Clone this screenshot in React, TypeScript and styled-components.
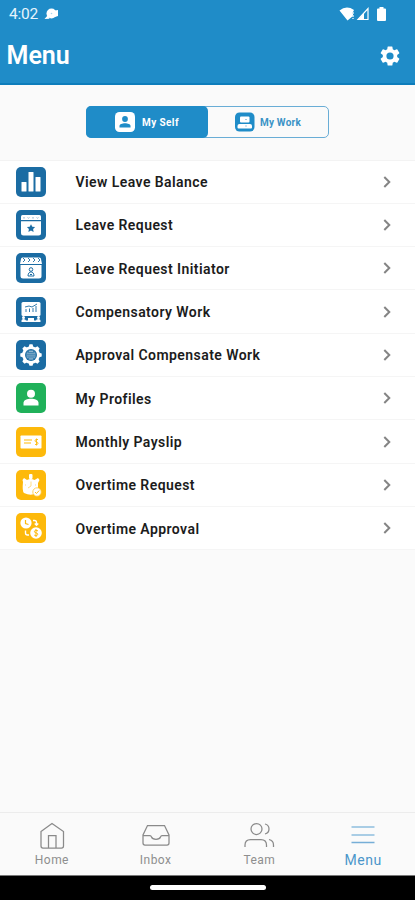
import React from "react";
import styled, { createGlobalStyle } from "styled-components";

const GlobalStyle = createGlobalStyle`
  * { box-sizing: border-box; }
  body { margin: 0; background: #fafafa; font-family: Roboto, sans-serif; }
  svg { display: block; flex: none; }
`;

const Screen = styled.div`
  width: 415px;
  height: 900px;
  display: flex;
  flex-direction: column;
  background: #fafafa;
  overflow: hidden;
`;

const Header = styled.header`
  height: 85px;
  flex: none;
  background: #1f8cc8;
  border-bottom: 2px solid #0d7dbb;
  color: #fff;
`;

const StatusBar = styled.div`
  height: 27px;
  display: flex;
  align-items: center;
  padding: 0 27px 0 9px;
`;

const Clock = styled.span`
  width: 35px;
  font-size: 15.5px;
  line-height: 20px;
  letter-spacing: -0.25px;
  color: #e6f4fc;
`;

const StatusIcons = styled.div`
  display: flex;
  align-items: center;
  margin-left: auto;
`;

const TitleBar = styled.div`
  height: 56px;
  display: flex;
  align-items: center;
  justify-content: space-between;
  padding: 1px 13px 0 6.5px;
`;

const Title = styled.h1`
  margin: 0;
  font-size: 25px;
  font-weight: 600;
  line-height: 30px;
`;

const ToggleArea = styled.div`
  height: 75.5px;
  flex: none;
  display: flex;
  justify-content: center;
  padding-top: 21px;
  border-bottom: 1px solid #f3f3f3;
`;

const Toggle = styled.div`
  width: 243px;
  height: 32px;
  display: flex;
  border: 1px solid #69add6;
  border-radius: 5px;
`;

const ToggleButton = styled.button<{ $active?: boolean }>`
  flex: ${(p) => (p.$active ? "0 0 122px" : "1")};
  margin: ${(p) => (p.$active ? "-1px 0 -1px -1px" : "0")};
  padding: ${(p) => (p.$active ? "0 0 0 29px" : "0 0 0 27px")};
  border: 0;
  border-radius: 5px;
  display: flex;
  align-items: center;
  gap: ${(p) => (p.$active ? "7px" : "5px")};
  font: 700 10px Roboto, sans-serif;
  letter-spacing: ${(p) => (p.$active ? 0.4 : 0.2)}px;
  background: ${(p) => (p.$active ? "#1f8cc8" : "transparent")};
  color: ${(p) => (p.$active ? "#fff" : "#3b93c6")};
`;

const List = styled.ul`
  list-style: none;
  margin: 0;
  padding: 0;
  background: #fff;
`;

const Row = styled.li`
  height: 43.33px;
  display: flex;
  align-items: center;
  padding: 0 21px 0 16px;
  border-bottom: 1px solid #f5f5f5;
`;

const Tile = styled.span<{ $color: string }>`
  width: 30px;
  height: 30px;
  border-radius: 5px;
  background: ${(p) => p.$color};
`;

const Label = styled.span`
  flex: 1;
  padding: 1px 0 0 29.5px;
  font-size: 14px;
  font-weight: 600;
  line-height: 20px;
  letter-spacing: 0.43px;
  color: #1c1c1c;
`;

const Nav = styled.nav`
  height: 63px;
  margin-top: auto;
  flex: none;
  display: grid;
  grid-template-columns: repeat(4, 1fr);
  border-top: 1px solid #ececec;
`;

const NavItem = styled.a<{ $active?: boolean }>`
  display: flex;
  flex-direction: column;
  align-items: center;
  padding-top: 8px;
  font-size: ${(p) => (p.$active ? 14 : 12)}px;
  line-height: 18px;
  letter-spacing: ${(p) => (p.$active ? 0.6 : 0.45)}px;
  color: ${(p) => (p.$active ? "#4b96ca" : "#8e8e8e")};
`;

const SystemBar = styled.div`
  height: 25px;
  flex: none;
  display: flex;
  align-items: center;
  justify-content: center;
  background: #000;
  border-top: 1px solid #777;
`;

const HomeHandle = styled.span`
  width: 116px;
  height: 5px;
  margin-top: -2px;
  border-radius: 3px;
  background: #fff;
`;

const BLUE = "#1b6ca3";
const GREEN = "#20b15a";
const YELLOW = "#fdb90b";

const Glyph = ({ children }: { children: React.ReactNode }) => (
  <svg width="30" height="30" viewBox="0 0 30 30" fill="#fff">{children}</svg>
);

const BarsGlyph = () => (
  <Glyph>
    <rect x="5.5" y="15" width="5" height="9.500" rx=".6" />
    <rect x="12.500" y="5" width="5" height="19.500" rx=".6" />
    <rect x="19.500" y="10" width="5" height="14.500" rx=".6" />
  </Glyph>
);

const CalendarStarGlyph = () => (
  <Glyph>
    <path d="M5 6.500Q5 5 6.500 5h17Q25 5 25 6.500V10H5z" />
    <path d="M5 11.300h20V23q0 2.500-2.500 2.500h-15Q5 25.500 5 23z" />
    <path d="M7 7.500q1 1.500 2 0m2.500 0q1 1.500 2 0m2.500 0q1 1.500 2 0m2.500 0q1 1.500 2 0" fill="none" stroke="#86afcb" strokeWidth=".8" />
    <path d="m15 14.200 1.300 2.500 2.800.4-2 2 .5 2.800-2.600-1.300-2.600 1.300.5-2.800-2-2 2.800-.4z" fill={BLUE} />
  </Glyph>
);

const CalendarPersonGlyph = () => (
  <Glyph>
    <path d="M5 6q0-1.500 1.500-1.500h17Q25 4.500 25 6l1 5H4z" />
    <path d="M4.500 12h21v11q0 2.500-2.500 2.500H7q-2.500 0-2.500-2.500z" />
    <path d="m7 5 2 2-2 2m5-4 2 2-2 2m5-4 2 2-2 2m5-4 2 2-2 2" fill="none" stroke={BLUE} strokeWidth=".9" />
    <circle cx="15" cy="16.500" r="1.800" fill="none" stroke={BLUE} />
    <path d="M12 23c0-5.500 6-5.500 6 0zm2-1.500h2" fill="none" stroke={BLUE} />
  </Glyph>
);

const BoardGlyph = () => (
  <Glyph>
    <rect x="5.500" y="5" width="19" height="14" rx="1.500" />
    <path d="M10 15v-3m3.500 3v-3.500m3.500 3.500v-4m3 4V9M9 10l4-1 3 1 5-3" fill="none" stroke={BLUE} strokeWidth=".9" />
    <circle cx="7.500" cy="20.500" r="1.500" />
    <circle cx="22.500" cy="20.500" r="1.500" />
    <path d="M5.500 25v-1.500q0-1.500 2-1.500t2.500 1.500h2V21h6v2.500h2q0-1.500 2.500-1.500 2 0 2 1.500V25z" />
  </Glyph>
);

const ApprovalGlyph = () => (
  <Glyph>
    <circle cx="15" cy="15" r="8.800" />
    {[0, 45, 90, 135].map((angle) => (
      <path
        key={angle}
        d="M13.500 4.300h3l1.300 4v13.400l-1.300 4h-3l-1.300-4V8.300z"
        transform={`rotate(${angle} 15 15)`}
      />
    ))}
    <circle cx="15" cy="15" r="6" fill={BLUE} />
    <circle cx="15" cy="15" r="4.700" fill="none" stroke="#6f9fc1" strokeWidth=".6" />
    <path d="M11 13.200h8m-8 1.900h8m-8 1.900h8M13 11.400h4m-4 7.400h4" stroke="#bcd2e1" strokeWidth=".8" />
  </Glyph>
);

const PersonGlyph = () => (
  <Glyph>
    <circle cx="15" cy="10.800" r="4" />
    <path d="M7.500 22.500v-2.700c0-5.500 15-5.500 15 0v2.700z" />
  </Glyph>
);

const PayslipGlyph = () => (
  <Glyph>
    <rect x="4.500" y="8.500" width="21" height="13" rx=".8" />
    <path d="M8 13h8m-8 3h7" stroke="#ffd15b" strokeWidth="1.300" />
    <path d="M22 12.500h-1.500q-1.500 0-1.500 1.300 0 1 1.500 1.200 1.500.2 1.500 1.300 0 1.200-1.500 1.200H19m1.500-6v7" fill="none" stroke={YELLOW} strokeWidth=".9" />
  </Glyph>
);

const StopwatchGlyph = () => (
  <Glyph>
    <rect x="13" y="4" width="3.500" height="5" rx="1" />
    <path d="m8 8 3 2q3.700-2 7.500 0L22 8l1.500 2-1.500 3v9q-6 5-14 1-2-2-1-11l-.5-2z" />
    <path d="M15 11.500v4.500l-3 2m-3-3h1m9 0h1" fill="none" stroke="#ffd465" strokeWidth=".8" />
    <circle cx="21" cy="22" r="4.200" stroke="#ffc83c" strokeWidth=".8" />
    <path d="m19 22 1.500 1.500 2.700-3" fill="none" stroke={YELLOW} strokeWidth=".9" />
  </Glyph>
);

const TimeMoneyGlyph = () => (
  <Glyph>
    <circle cx="10" cy="10" r="5.600" />
    <path d="M9.500 7v3.500l3 1" fill="none" stroke={YELLOW} strokeWidth="1.200" />
    <circle cx="20" cy="20" r="5.800" />
    <path d="M22 17.800q-3.500-1.200-3.700.5 0 1.300 1.700 1.600 2 .3 1.800 1.700-.2 1.600-3.600.6M20 16v8" fill="none" stroke={YELLOW} strokeWidth="1" />
    <path d="M17 7.500h1.500q2 0 2 2V12m-1.800-1.500 1.800 1.700 1.800-1.700M9.500 17.500v2.500q0 2 2 2h1.500" fill="none" stroke="#fff" strokeWidth="1.400" />
  </Glyph>
);

const SelfIcon = () => (
  <svg width="20" height="20" viewBox="0 0 20 20">
    <rect width="20" height="20" rx="4.500" fill="#fff" />
    <circle cx="10" cy="7" r="2.900" fill="#1f8cc8" />
    <path d="M4.500 15.500v-1.600c0-3.700 11-3.700 11 0v1.600z" fill="#1f8cc8" />
  </svg>
);

const WorkIcon = () => (
  <svg width="20" height="20" viewBox="0 0 20 20">
    <rect y=".5" width="19.500" height="19" rx="4.500" fill="#1f8cc8" />
    <rect x="5" y="4.500" width="9.500" height="6" rx="1" fill="#fff" />
    <path d="M2.500 15.500V14q0-2 2-2H15q2 0 2 2v1.500q0 1-1 1H3.500q-1 0-1-1z" fill="#fff" />
    <path d="M10 7.500h2M10 14h2" stroke="#9dcce7" />
  </svg>
);

const NotificationIcon = () => (
  <svg width="15" height="12" viewBox="0 0 15 12" fill="#fff">
    <circle cx="7.500" cy="5.500" r="5" />
    <path d="M4 7 .5 11l5-.3zM11 2.500l3-.5v6l-3 1z" />
    <circle cx="7.500" cy="5.500" r=".8" fill="#a9d5ed" />
  </svg>
);

const SignalIcons = () => (
  <svg width="49" height="16" viewBox="0 0 49 16" fill="#fff">
    <path d="M.5 4.500Q7.500-1 15 4l-1 2v4l-5.500 4.500z" />
    <path d="M14 6v7" stroke="#d2eaf6" strokeWidth="1.500" strokeDasharray="2 1" />
    <path d="M29 2.500v11H19z" fill="none" stroke="#fff" strokeWidth="1.200" />
    <path d="M25 7v7h-6z" />
    <path d="M38 3.500q0-1 1-1h1.500V1h4v1.500H46q1 0 1 1V14q0 1-1 1h-7q-1 0-1-1z" />
  </svg>
);

const SettingsIcon = () => (
  <svg width="24" height="24" viewBox="0 0 24 24" fill="#fff">
    <path d="M19.140 12.940c.04-.3.060-.61.060-.94 0-.32-.02-.64-.07-.94l2.030-1.580a.49.49 0 0 0 .12-.61l-1.920-3.320a.49.49 0 0 0-.59-.22l-2.390.96a7 7 0 0 0-1.620-.94L14.400 2.810a.48.48 0 0 0-.48-.41h-3.840a.47.47 0 0 0-.47.41l-.36 2.540c-.59.24-1.130.57-1.620.94l-2.390-.96a.48.48 0 0 0-.59.220L2.740 8.870a.48.48 0 0 0 .12.610l2.030 1.580c-.05.3-.09.630-.09.940s.02.640.07.940l-2.030 1.580a.49.49 0 0 0-.12.610l1.920 3.320c.12.220.37.290.59.220l2.390-.96c.5.380 1.030.7 1.620.94l.36 2.540c.05.240.24.410.48.410h3.840c.24 0 .44-.17.470-.41l.36-2.540c.59-.24 1.130-.56 1.620-.94l2.390.96c.22.080.47 0 .59-.22l1.920-3.320a.48.48 0 0 0-.12-.61zM12 15.600a3.600 3.600 0 1 1 0-7.200 3.600 3.600 0 0 1 0 7.200z" />
  </svg>
);

const Chevron = () => (
  <svg width="14" height="16" viewBox="0 0 14 16" fill="none" stroke="#858585" strokeWidth="2">
    <path d="m4.300 3 5 5-5 5" />
  </svg>
);

const NavIcon = ({ children, color = "#8a8a8a" }: { children: React.ReactNode; color?: string }) => (
  <svg width="32" height="30" viewBox="0 0 32 30" fill="none" stroke={color} strokeWidth="1.250">{children}</svg>
);

const HomeIcon = () => (
  <NavIcon>
    <path d="M5 10.500 16 2.500l11.500 8V25q0 2-2 2H7q-2 0-2-2zM12.500 27V14.500h7.500V27" />
  </NavIcon>
);

const InboxIcon = () => (
  <NavIcon>
    <path d="M7.500 4.500h17L29 14v8q0 2-2 2H5q-2 0-2-2v-8zM3 14.500h7q1 0 1.500 1.500c1 3 8 3 9 0q.5-1.500 1.500-1.500h7" />
  </NavIcon>
);

const TeamIcon = () => (
  <NavIcon>
    <circle cx="13.500" cy="8" r="5.500" />
    <path d="M2 26v-2q0-5.500 5.500-5.500H18q5.500 0 5.500 5.500v2M22 3q4 1 4 5t-4 5m4 5.500q4.500 1 4.500 5.500v2" />
  </NavIcon>
);

const MenuIcon = () => (
  <NavIcon color="#76aed7">
    <path d="M4.500 6h23m-23 8h23" stroke="#a9cde5" strokeWidth="2" />
    <path d="M4.500 21.500h23" strokeWidth="1.500" />
  </NavIcon>
);

const rows = [
  { label: "View Leave Balance", color: BLUE, Icon: BarsGlyph },
  { label: "Leave Request", color: BLUE, Icon: CalendarStarGlyph },
  { label: "Leave Request Initiator", color: BLUE, Icon: CalendarPersonGlyph },
  { label: "Compensatory Work", color: BLUE, Icon: BoardGlyph },
  { label: "Approval Compensate Work", color: BLUE, Icon: ApprovalGlyph },
  { label: "My Profiles", color: GREEN, Icon: PersonGlyph },
  { label: "Monthly Payslip", color: YELLOW, Icon: PayslipGlyph },
  { label: "Overtime Request", color: YELLOW, Icon: StopwatchGlyph },
  { label: "Overtime Approval", color: YELLOW, Icon: TimeMoneyGlyph },
];

export default function App() {
  return (
    <Screen>
      <GlobalStyle />
      <Header>
        <StatusBar>
          <Clock>4:02</Clock>
          <NotificationIcon />
          <StatusIcons><SignalIcons /></StatusIcons>
        </StatusBar>
        <TitleBar>
          <Title>Menu</Title>
          <SettingsIcon />
        </TitleBar>
      </Header>
      <ToggleArea>
        <Toggle>
          <ToggleButton $active><SelfIcon />My Self</ToggleButton>
          <ToggleButton><WorkIcon />My Work</ToggleButton>
        </Toggle>
      </ToggleArea>
      <List>
        {rows.map(({ label, color, Icon }) => (
          <Row key={label}>
            <Tile $color={color}><Icon /></Tile>
            <Label>{label}</Label>
            <Chevron />
          </Row>
        ))}
      </List>
      <Nav>
        <NavItem><HomeIcon />Home</NavItem>
        <NavItem><InboxIcon />Inbox</NavItem>
        <NavItem><TeamIcon />Team</NavItem>
        <NavItem $active><MenuIcon />Menu</NavItem>
      </Nav>
      <SystemBar><HomeHandle /></SystemBar>
    </Screen>
  );
}
